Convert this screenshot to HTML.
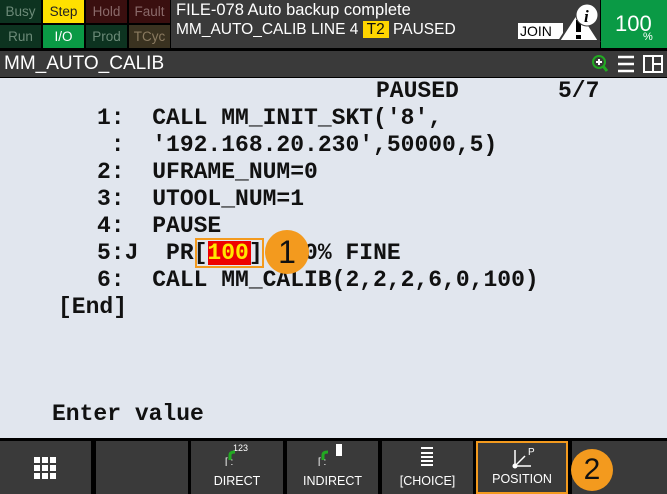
<!DOCTYPE html>
<html><head><meta charset="utf-8"><style>
*{margin:0;padding:0;box-sizing:border-box}
body{width:667px;height:494px;background:#000;position:relative;overflow:hidden;font-family:"Liberation Sans",sans-serif}
.a{position:absolute}
.st{position:absolute;width:41px;height:23px;font-size:13.5px;text-align:center;line-height:23px}
.code{position:absolute;font-family:"Liberation Mono",monospace;font-weight:bold;font-size:23px;color:#111;white-space:pre;line-height:27px}
.btn{position:absolute;top:441px;height:53px;background:#3a3a3a;color:#fff;font-size:12.5px;text-align:center}
.btn span{position:absolute;left:0;right:0;bottom:6px}
</style></head><body>
<div class="st" style="left:0;top:0;background:#0d3320;color:#6c8a78">Busy</div>
<div class="st" style="left:43px;top:0;background:#ffe000;color:#222">Step</div>
<div class="st" style="left:86px;top:0;background:#3a0f0f;color:#8a6a6a">Hold</div>
<div class="st" style="left:129px;top:0;background:#3a0f0f;color:#8a6a6a">Fault</div>
<div class="st" style="left:0;top:25px;background:#0d3320;color:#6c8a78">Run</div>
<div class="st" style="left:43px;top:25px;background:#0a9a45;color:#fff">I/O</div>
<div class="st" style="left:86px;top:25px;background:#0d3320;color:#6c8a78">Prod</div>
<div class="st" style="left:129px;top:25px;background:#3a3220;color:#8a7a60">TCyc</div>
<div class="a" style="left:171px;top:0;width:429px;height:48px;background:#3a3a3a"></div>
<div class="a" style="left:176px;top:1px;color:#fff;font-size:16.5px">FILE-078 Auto backup complete</div>
<div class="a" style="left:176px;top:21px;color:#fff;font-size:15.5px">MM_AUTO_CALIB LINE 4 <span style="background:#ffd500;color:#111;padding:0 4px">T2</span> PAUSED</div>
<div class="a" style="left:518px;top:23px;width:45px;height:16px;background:#fff;color:#000;font-size:14px;line-height:16px;padding-left:2px">JOIN</div>
<svg class="a" style="left:555px;top:2px" width="46" height="40"><polygon points="4,39 24,8 44,39" fill="#fff" stroke="#3a3a3a" stroke-width="2"/><rect x="21" y="18" width="5" height="12" fill="#000"/><rect x="21" y="33" width="5" height="4" fill="#000"/><circle cx="32" cy="13" r="11" fill="#fff" stroke="#3a3a3a"/><text x="29" y="20" font-family="Liberation Serif" font-style="italic" font-weight="bold" font-size="17" fill="#000">i</text></svg>
<div class="a" style="left:601px;top:0;width:66px;height:48px;background:#0a9a45;color:#fff"><div class="a" style="left:14px;top:11px;font-size:22px">100</div><div class="a" style="left:42px;top:31px;font-size:11px">%</div></div>
<div class="a" style="left:0;top:51px;width:667px;height:26px;background:#3a3a3a"></div>
<div class="a" style="left:4px;top:53px;color:#fff;font-size:19px">MM_AUTO_CALIB</div>
<svg class="a" style="left:590px;top:54px" width="77" height="22"><circle cx="9" cy="8" r="6" fill="none" stroke="#2a2" stroke-width="2"/><path d="M6 8h6M9 5v6" stroke="#fff" stroke-width="2"/><path d="M13 12l4 5" stroke="#2a2" stroke-width="3"/><path d="M28 3h16M28 10h16M28 17h16" stroke="#fff" stroke-width="2.5"/><rect x="54" y="2" width="18" height="16" fill="none" stroke="#fff" stroke-width="2"/><path d="M63 2v16M63 10h9" stroke="#fff" stroke-width="2"/></svg>
<div class="a" style="left:0;top:78px;width:667px;height:360px;background:#e1e6ee"></div>
<div class="code" style="left:376px;top:78px">PAUSED</div>
<div class="code" style="left:558px;top:78px">5/7</div>
<div class="a" style="left:195px;top:238px;width:69px;height:30px;border:2px solid #f39a1e"></div>
<div class="a" style="left:208px;top:241px;width:43px;height:24px;background:#e00"></div>
<div class="code" style="left:97px;top:105px">1:  CALL MM_INIT_SKT('8',
 :  '192.168.20.230',50000,5)
2:  UFRAME_NUM=0
3:  UTOOL_NUM=1
4:  PAUSE
5:J  PR[<span style="color:#ffe600">100</span>] 100% FINE
6:  CALL MM_CALIB(2,2,2,6,0,100)</div>
<div class="code" style="left:58px;top:294px">[End]</div>
<div class="code" style="left:52px;top:401px">Enter value</div>
<div class="a" style="left:265px;top:230px;width:44px;height:44px;border-radius:50%;background:#f39a1e;color:#111;font-size:32px;text-align:center;line-height:44px">1</div>
<div class="btn" style="left:0;width:91px"><svg class="a" style="left:34px;top:16px" width="22" height="22" fill="#fff"><rect x="0" y="0" width="6" height="6"/><rect x="8" y="0" width="6" height="6"/><rect x="16" y="0" width="6" height="6"/><rect x="0" y="8" width="6" height="6"/><rect x="8" y="8" width="6" height="6"/><rect x="16" y="8" width="6" height="6"/><rect x="0" y="16" width="6" height="6"/><rect x="8" y="16" width="6" height="6"/><rect x="16" y="16" width="6" height="6"/></svg></div>
<div class="btn" style="left:96px;width:92px"></div>
<div class="btn" style="left:191px;width:92px"><svg class="a" style="left:34px;top:1px" width="30" height="24"><text x="8" y="9" font-size="9" fill="#fff">123</text><path d="M5 18v-5q0-3 5-3" stroke="#2a2" stroke-width="3" fill="none"/><text x="0" y="23" font-size="10" fill="#fff">[ :</text></svg><span>DIRECT</span></div>
<div class="btn" style="left:287px;width:91px"><svg class="a" style="left:30px;top:1px" width="30" height="24"><rect x="19" y="2" width="6" height="12" fill="#fff"/><path d="M6 18v-5q0-3 5-3" stroke="#2a2" stroke-width="3" fill="none"/><text x="1" y="23" font-size="10" fill="#fff">[ :</text></svg><span>INDIRECT</span></div>
<div class="btn" style="left:382px;width:91px"><svg class="a" style="left:38px;top:5px" width="14" height="20"><path d="M1 2h12M1 7h12M1 11h12M1 15h12M1 19h12" stroke="#fff" stroke-width="2"/></svg><span>[CHOICE]</span></div>
<div class="btn" style="left:476px;width:92px;border:2px solid #f39a1e"><svg class="a" style="left:34px;top:3px" width="26" height="24"><text x="16" y="9" font-size="10" fill="#fff">P</text><path d="M3 20V4M3 20h16M3 20l10-10" stroke="#fff" stroke-width="1.5" fill="none"/><circle cx="3" cy="20" r="2.5" fill="#fff"/></svg><span>POSITION</span></div>
<div class="btn" style="left:572px;width:95px"></div>
<div class="a" style="left:571px;top:449px;width:42px;height:42px;border-radius:50%;background:#f39a1e;color:#111;font-size:30px;text-align:center;line-height:42px">2</div>
</body></html>
